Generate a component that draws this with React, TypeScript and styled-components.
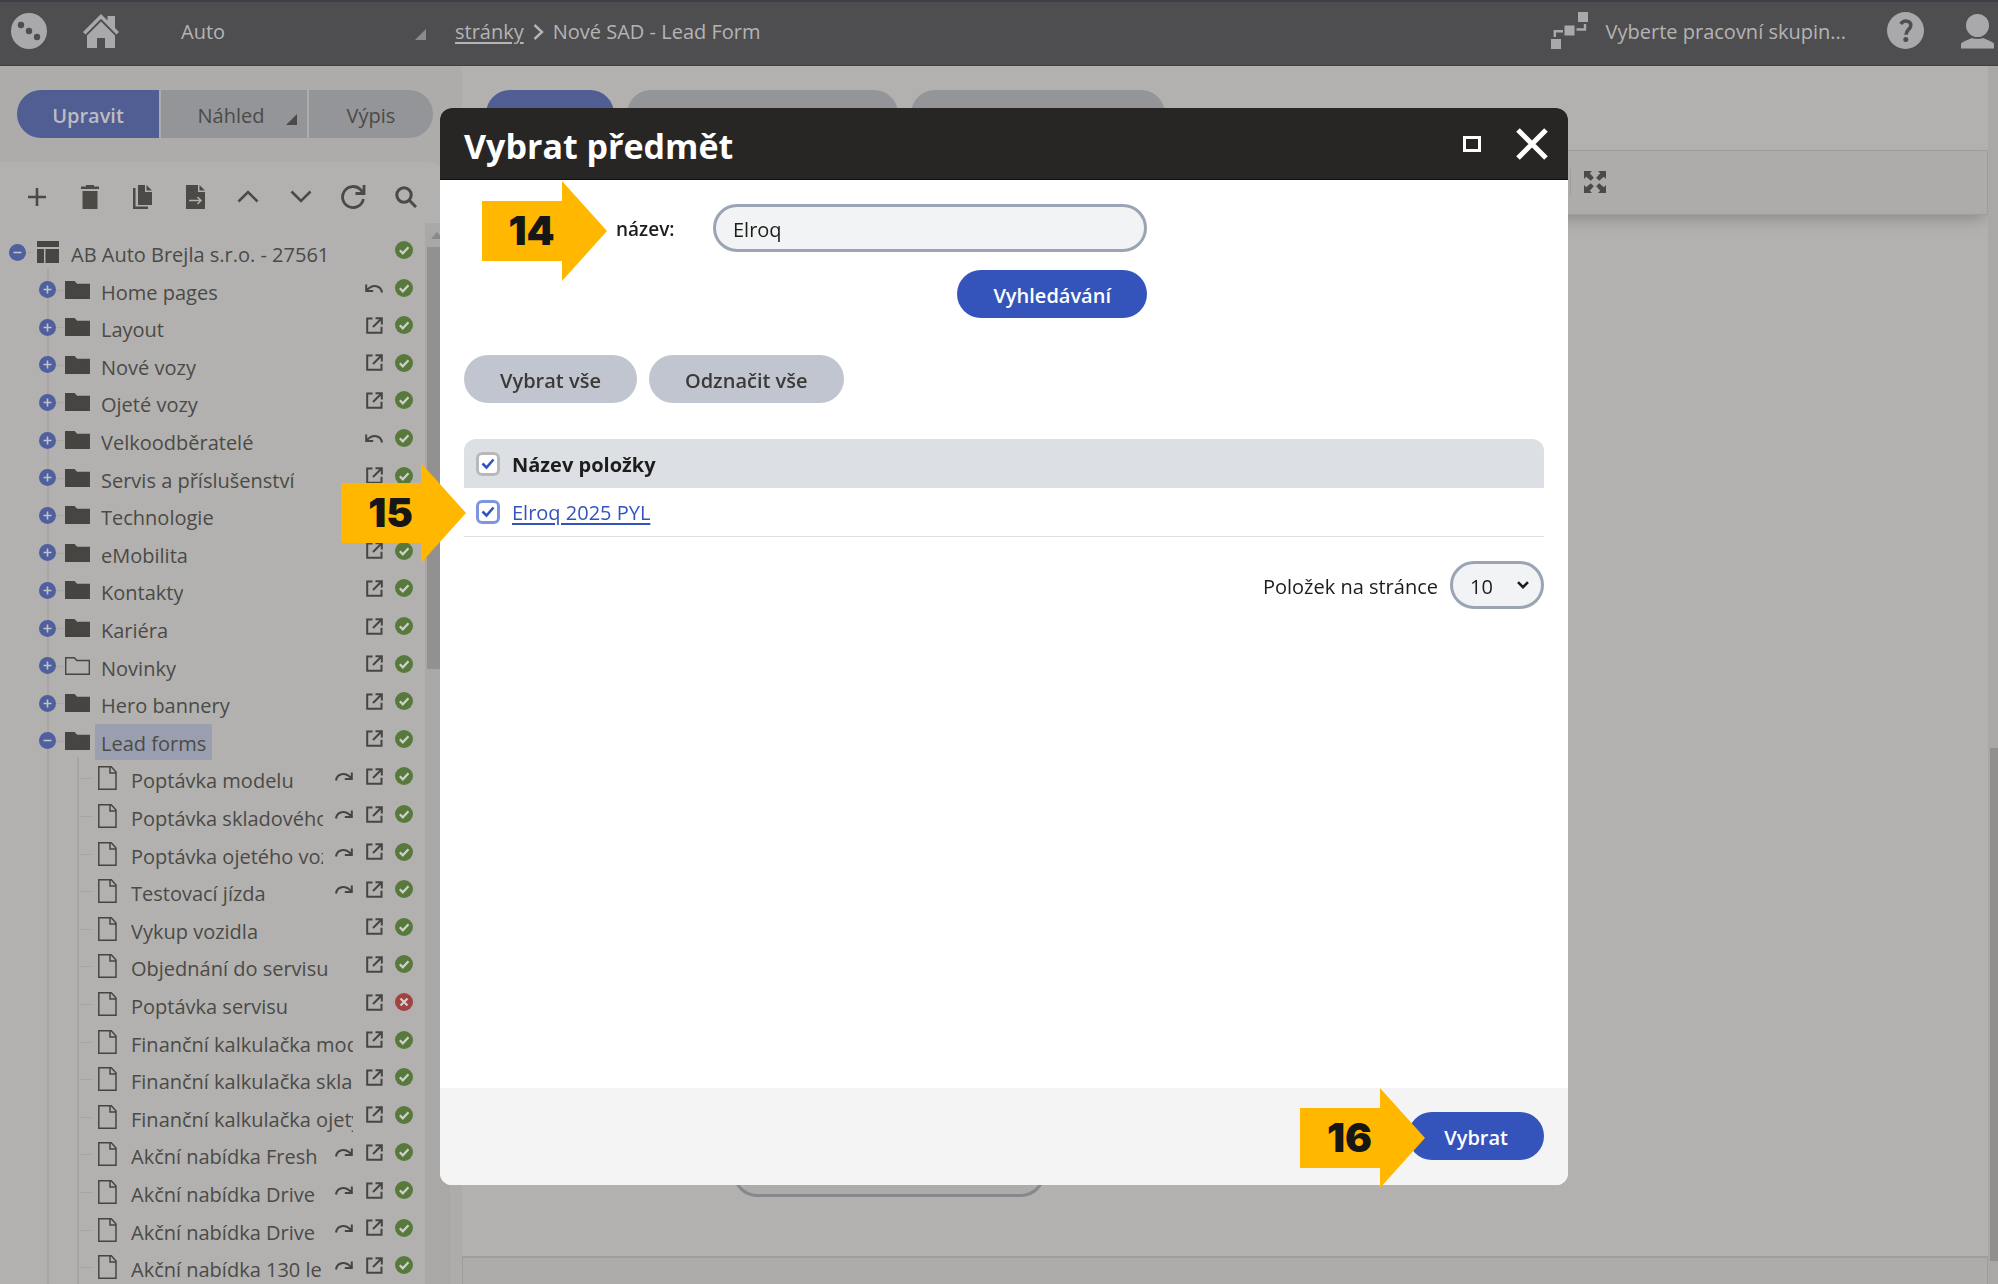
import React, { useState } from "react";
import styled, { createGlobalStyle, css } from "styled-components";

const font = `"Open Sans", "Noto Sans", "Liberation Sans", sans-serif`;

const c = {
  bar: "#4e4e50",
  barEdge: "#3f3f49",
  barText: "#b4b4b4",
  panel: "#b2b1af",
  panelAlt: "#adacaa",
  line: "#9f9e9c",
  ink: "#4b4a47",
  glyph: "#464542",
  accentDim: "#505e93",
  greyDim: "#949599",
  accent: "#3454bb",
  grey: "#c1c5cf",
  fieldLine: "#9aa4b5",
  field: "#f2f3f5",
  dark: "#272624",
  marker: "#ffb700",
};

const Global = createGlobalStyle`
  *, *::before, *::after { box-sizing: border-box; }
  body { margin: 0; font-family: ${font}; font-size: 20px; line-height: 28px; background: ${c.panel}; }
  button, input, select { font: inherit; color: inherit; }
  button { border: 0; padding: 0; background: none; cursor: pointer; }
  svg { display: block; flex: none; }
`;

const Shell = styled.div`
  height: 100vh;
  display: flex;
  flex-direction: column;
  overflow: hidden;
`;

/* ---------- top bar ---------- */

const TopBar = styled.header`
  flex: none;
  height: 66px;
  display: flex;
  align-items: center;
  background: ${c.bar};
  color: ${c.barText};
  border-top: 2px solid ${c.barEdge};
  border-bottom: 1px solid ${c.barEdge};
  padding-right: 4px;
  padding-bottom: 6px;
`;

const BarStart = styled.div`
  width: 455px;
  padding: 0 29px 0 11px;
  display: flex;
  align-items: center;
  gap: 36px;
`;

const SiteSwitch = styled.button`
  flex: 1;
  display: flex;
  align-items: center;
  justify-content: space-between;
  padding: 2px 0 0 26px;
  svg { margin-top: 6px; color: #8b8b8b; }
`;

const Crumbs = styled.nav`
  flex: 1;
  display: flex;
  align-items: center;
  gap: 9px;
  padding-top: 2px;
  a { color: inherit; text-underline-offset: 3px; }
`;

const BarEnd = styled.div`
  display: flex;
  align-items: center;
  gap: 37px;
`;

const GroupPicker = styled.button`
  display: flex;
  align-items: center;
  gap: 18px;
  margin-right: 4px;
  span { padding-top: 2px; }
`;

/* ---------- workspace ---------- */

const Workspace = styled.div`
  flex: 1;
  min-height: 0;
  display: flex;
`;

const Sidebar = styled.aside`
  flex: none;
  width: 462px;
  display: flex;
  flex-direction: column;
  background: ${c.panelAlt};
`;

const ModeTabs = styled.div`
  display: flex;
  gap: 2px;
  padding: 24px 0 24px 17px;
  height: 96px;
  flex: none;
`;

const ModeTab = styled.button<{ $width: number; $active?: boolean; $menu?: boolean }>`
  width: ${(p) => p.$width}px;
  height: 48px;
  padding: 4px 0 0 ${(p) => (p.$menu ? 27 : 0)}px;
  display: flex;
  align-items: center;
  justify-content: center;
  gap: 22px;
  background: ${(p) => (p.$active ? c.accentDim : c.greyDim)};
  color: ${(p) => (p.$active ? "#bdbdc0" : c.ink)};
  font-weight: ${(p) => (p.$active ? 600 : 500)};
  &:first-child { border-radius: 24px 0 0 24px; }
  &:last-child { border-radius: 0 24px 24px 0; }
  svg { margin-top: 6px; }
`;

const TreePanel = styled.div`
  flex: 1;
  min-height: 0;
  margin-right: 12px;
  display: flex;
  flex-direction: column;
  background: ${c.panel};
  border-top-right-radius: 24px;
  color: ${c.ink};
`;

const TreeTools = styled.div`
  flex: none;
  height: 61px;
  display: flex;
  align-items: center;
  justify-content: space-between;
  padding: 8px 29px 0 22px;
`;

const ToolButton = styled.button`
  width: 30px;
  height: 30px;
  display: grid;
  place-items: center;
`;

const TreeScroll = styled.div`
  flex: 1;
  min-height: 0;
  display: flex;
`;

const TreeList = styled.ul`
  flex: 1;
  min-width: 0;
  margin: 0;
  padding: 8px 6px 0 3px;
  list-style: none;
  overflow: hidden;
`;

const TreeRow = styled.li`
  height: 38px;
  display: flex;
  align-items: center;
  &:nth-child(5n + 2), &:nth-child(5n + 4) { height: 37px; }
`;

const Rail = styled.span<{ $vertical?: boolean; $branch?: boolean }>`
  flex: none;
  width: 30px;
  align-self: stretch;
  display: grid;
  place-items: center;
  padding: 4px 1px 0 0;
  background-repeat: no-repeat;
  background-image:
    linear-gradient(${(p) => (p.$vertical ? "#a7a6a5" : "transparent")} 0 0),
    linear-gradient(${(p) => (p.$branch ? "#a7a6a5" : "transparent")} 0 0);
  background-size: 2px 100%, 15px 1px;
  background-position: 14px 0, 15px 21px;
`;

const NodeToggle = styled.button`
  width: 17px;
  height: 17px;
  border-radius: 50%;
  display: grid;
  place-items: center;
  background: #505f9d;
  color: #c4c4c6;
`;

const NodeIcon = styled.span`
  flex: none;
  width: 32px;
  padding: 4px 0 0 2px;
  color: ${c.glyph};
`;

const NodeLabel = styled.span<{ $selected?: boolean }>`
  min-width: 0;
  height: 36px;
  margin-top: 6px;
  padding: 2px 6px 0;
  background: ${(p) => (p.$selected ? "#9a9fb0" : "transparent")};
`;

const NodeText = styled.span`
  display: block;
  line-height: 36px;
  margin-bottom: -2px;
  overflow: hidden;
  white-space: nowrap;
`;

const NodeActions = styled.span`
  margin-left: auto;
  flex: none;
  display: flex;
  color: ${c.glyph};
  > * { width: 30px; display: grid; place-items: center; }
`;

const TreeBar = styled.div`
  flex: none;
  width: 25px;
  display: flex;
  flex-direction: column;
  align-items: center;
  background: #a9a8a6;
  padding: 9px 3px 0 2px;
  color: #8a8987;
`;

const TreeThumb = styled.div`
  margin-top: 8px;
  width: 100%;
  height: 422px;
  background: #92918f;
`;

/* ---------- main area ---------- */

const Main = styled.main`
  flex: 1;
  min-width: 0;
  display: flex;
`;

const Page = styled.div`
  flex: 1;
  min-width: 0;
  display: flex;
  flex-direction: column;
  background: ${c.panel};
`;

const PageTabs = styled.div`
  height: 84px;
  flex: none;
  padding: 24px 24px 0;
  display: flex;
  gap: 13px;
`;

const PageTab = styled.button<{ $width: number; $active?: boolean }>`
  width: ${(p) => p.$width}px;
  height: 48px;
  padding-top: 4px;
  border-radius: 24px;
  font-weight: 600;
  background: ${(p) => (p.$active ? c.accentDim : c.greyDim)};
  color: ${(p) => (p.$active ? "#bdbdc0" : c.ink)};
`;

const EditorBar = styled.div`
  flex: none;
  height: 65px;
  display: flex;
  align-items: center;
  padding: 0 0 2px 1107px;
  gap: 13px;
  background: ${c.panelAlt};
  border: 1px solid ${c.line};
  box-shadow: 0 8px 14px -4px #8d8c8a;
  color: ${c.ink};
`;

const Divider = styled.span`
  width: 1px;
  height: 26px;
  background: ${c.line};
`;

const EditorBody = styled.div`
  flex: 1;
  min-height: 0;
  display: flex;
  align-items: flex-end;
  padding: 0 0 59px 271px;
`;

const DimField = styled.input`
  width: 312px;
  height: 48px;
  border: 3px solid #85888f;
  border-radius: 24px;
  background: ${c.panelAlt};
`;

const EditorFoot = styled.div`
  flex: none;
  height: 28px;
  background: ${c.panelAlt};
  border: 1px solid ${c.line};
  border-top-width: 2px;
  border-bottom: 0;
`;

const PageBar = styled.div`
  flex: none;
  width: 10px;
  background: #a9a8a6;
  display: flex;
  align-items: flex-end;
  padding: 0 0 23px 2px;
`;

const PageThumb = styled.div`
  width: 100%;
  height: 513px;
  background: #91908e;
`;

/* ---------- dialog ---------- */

const Backdrop = styled.div`
  position: fixed;
  inset: 0;
  padding: 108px 430px 99px 440px;
  display: flex;
`;

const Dialog = styled.section`
  flex: 1;
  min-width: 0;
  display: flex;
  flex-direction: column;
  border-radius: 12px;
  background: #fff;
  color: #1d1d1b;
`;

const DialogHead = styled.header`
  flex: none;
  height: 72px;
  display: flex;
  align-items: center;
  gap: 34px;
  padding: 0 20px 0 24px;
  border-radius: 12px 12px 0 0;
  border-bottom: 1px solid #0e0e0d;
  background: ${c.dark};
  color: #fff;
`;

const DialogTitle = styled.h2`
  flex: 1;
  margin: 0;
  padding-top: 4px;
  font-size: 34px;
  line-height: 44px;
  font-weight: 700;
`;

const DialogBody = styled.div`
  flex: 1;
  min-height: 0;
  padding: 24px 24px 0;
`;

const SearchForm = styled.form`
  position: relative;
  display: grid;
  grid-template-columns: 97px 434px;
  padding-left: 152px;
  row-gap: 18px;
  align-items: center;
`;

const FieldLabel = styled.label`
  padding-top: 2px;
  font-size: 19px;
  font-weight: 600;
`;

const pill = css`
  height: 48px;
  border-radius: 24px;
`;

const fieldBox = css`
  ${pill}
  border: 3px solid ${c.fieldLine};
  background: ${c.field};
  padding: 3px 17px 0;
  outline: 0;
`;

const TextField = styled.input`
  ${fieldBox}
  width: 100%;
`;

const Pill = styled.button<{ $tone?: "primary" | "plain"; $end?: boolean }>`
  ${pill}
  padding: 4px 36px 0;
  font-weight: 600;
  background: ${(p) => (p.$tone === "primary" ? c.accent : c.grey)};
  color: ${(p) => (p.$tone === "primary" ? "#fff" : "#3b3a37")};
  ${(p) => p.$end && css`grid-column: 2; justify-self: end;`}
`;

const BulkActions = styled.div`
  display: flex;
  gap: 12px;
  margin: 37px 0 36px;
`;

const ItemTable = styled.table`
  width: 100%;
  border-spacing: 0;
  th, td { height: 49px; padding: 0 0 0 12px; text-align: left; vertical-align: middle; }
  th { background: #dcdfe4; font-weight: 700; }
  th:first-child { width: 36px; border-top-left-radius: 12px; }
  th:last-child { border-top-right-radius: 12px; }
  th:last-child, td:last-child { padding-top: 2px; }
  td { border-bottom: 1px solid #dfdfdf; }
  a { color: ${c.accent}; text-underline-offset: 3px; }
`;

const TableArea = styled.div`
  position: relative;
`;

const Tick = styled.label<{ $tone: string }>`
  display: grid;
  width: 24px;
  height: 24px;
  place-items: center;
  color: ${c.accent};
  input, svg { grid-area: 1 / 1; }
  input {
    appearance: none;
    width: 24px;
    height: 24px;
    margin: 0;
    border: 3px solid ${(p) => p.$tone};
    border-radius: 6px;
    background: #fff;
  }
  svg { pointer-events: none; }
  input:not(:checked) + svg { visibility: hidden; }
`;

const Pager = styled.div`
  display: flex;
  align-items: center;
  justify-content: flex-end;
  gap: 12px;
  margin-top: 24px;
  label { padding-top: 3px; }
`;

const SelectBox = styled.span`
  display: grid;
  align-items: center;
  select, svg { grid-area: 1 / 1; }
  select { ${fieldBox} appearance: none; width: 94px; }
  svg { justify-self: end; margin-right: 15px; pointer-events: none; }
`;

const DialogFoot = styled.footer`
  position: relative;
  flex: none;
  display: flex;
  justify-content: flex-end;
  padding: 24px 24px 25px;
  border-radius: 0 0 12px 12px;
  background: #f4f4f4;
`;

const Marker = styled.span<{ $left?: number; $right?: number; $top: number }>`
  position: absolute;
  top: ${(p) => p.$top}px;
  ${(p) => (p.$left !== undefined ? `left: ${p.$left}px;` : "")}
  ${(p) => (p.$right !== undefined ? `right: ${p.$right}px;` : "")}
  width: 125px;
  height: 100px;
  padding-right: 26px;
  display: grid;
  place-items: center;
  background: ${c.marker};
  clip-path: polygon(0 20%, 64% 20%, 64% 0, 100% 50%, 64% 100%, 64% 80%, 0 80%);
  font-family: Inter, "Open Sans", sans-serif;
  font-size: 40px;
  line-height: 48px;
  font-weight: 900;
  color: #161616;
  pointer-events: none;
`;

/* ---------- icons ---------- */

const Corner = () => (
  <svg width="11" height="11" viewBox="0 0 11 11"><path d="M11 0v11H0z" fill="currentColor" /></svg>
);
const DotsLogo = () => (
  <svg width="36" height="36" viewBox="0 0 36 36">
    <circle cx="18" cy="18" r="18" fill="#a9a9ab" />
    <g fill={c.bar}><circle cx="10" cy="12" r="3.2" /><circle cx="18" cy="18" r="3.2" /><circle cx="26" cy="24" r="3.2" /></g>
  </svg>
);
const Home = () => (
  <svg width="36" height="34" viewBox="0 0 36 34" fill="#a9a9ab">
    <path d="M18 0 24.500 6.500V2H32v12l4 4-2.500 2.500L18 4.800 2.500 20.500 0 18z" />
    <path d="M18 7.500 32 21.500V34H22V24h-8v10H4V21.500z" />
  </svg>
);
const Chevron = () => (
  <svg width="11" height="18" viewBox="0 0 11 18" fill="none" stroke="currentColor" strokeWidth="2.400"><path d="m1.500 2 7.500 7-7.500 7" /></svg>
);
const Flow = () => (
  <svg width="37" height="37" viewBox="0 0 37 37" fill="#a9a9ab">
    <path d="M27 0h10v10H27zM13.500 13.500h10v10h-10zM0 27h10v10H0z" />
    <path d="M3.800 25V19.200H12M25.500 17.500H34V12" fill="none" stroke="#a9a9ab" strokeWidth="2.400" />
  </svg>
);
const Help = () => (
  <svg width="37" height="37" viewBox="0 0 37 37">
    <circle cx="18.500" cy="18.500" r="18.500" fill="#a9a9ab" />
    <path d="M13.800 12c1.300-2.200 3-3 5-3 3 0 5 1.700 5 4.400 0 4-4.800 4.400-4.800 9.400" fill="none" stroke={c.bar} strokeWidth="3.600" />
    <circle cx="18.800" cy="27.500" r="2.500" fill={c.bar} />
  </svg>
);
const User = () => (
  <svg width="33" height="36" viewBox="0 0 33 36" fill="#a9a9ab">
    <circle cx="16.500" cy="12.500" r="11.500" />
    <path d="M0 35.500v-5c3-2.500 7-3.500 11-5.500 3 1.200 8 1.200 11 0 4 2 8 3 11 5.500v5z" />
  </svg>
);

const stroke = { fill: "none", stroke: "currentColor" };
const Plus = () => (<svg width="18" height="18" viewBox="0 0 18 18" {...stroke} strokeWidth="2.600"><path d="M9 0v18M0 9h18" /></svg>);
const Trash = () => (<svg width="18" height="24" viewBox="0 0 18 24" fill="currentColor"><path d="M5 0h8v1.500h5V4H0V1.500h5zM1.500 6h15v18h-15z" /></svg>);
const Copy = () => (
  <svg width="19" height="24" viewBox="0 0 19 24" fill="currentColor">
    <path d="M5 0h7v7h7v13H5zM13.500 0 19 5.500h-5.500z" /><path d="M0 3h2.500v18.500H15V24H0z" />
  </svg>
);
const MoveDoc = () => (
  <svg width="19" height="24" viewBox="0 0 19 24">
    <path d="M0 0h12v7h7v17H0zM13.500 0 19 5.500h-5.500z" fill="currentColor" />
    <path d="M3 15.500h12M11.500 12l3.500 3.500-3.500 3.500" fill="none" stroke={c.panel} strokeWidth="1.500" />
  </svg>
);
const Up = () => (<svg width="22" height="13" viewBox="0 0 22 13" {...stroke} strokeWidth="2.600"><path d="m1.500 11.500 9.500-9.500 9.500 9.500" /></svg>);
const Down = () => (<svg width="22" height="13" viewBox="0 0 22 13" {...stroke} strokeWidth="2.600"><path d="m1.500 1.500 9.500 9.500 9.500-9.500" /></svg>);
const Refresh = () => (
  <svg width="26" height="24" viewBox="0 0 26 24" {...stroke} strokeWidth="2.800"><path d="M23.400 14A10.500 10.500 0 1 1 20.500 4.600L23.500 8M24 0v8.500h-8.500" /></svg>
);
const Search = () => (
  <svg width="22" height="22" viewBox="0 0 22 22" {...stroke} strokeWidth="3"><circle cx="9" cy="9" r="7.200" /><path d="m14 14 7 7" /></svg>
);

const LayoutIcon = () => (
  <svg width="24" height="22" viewBox="0 0 24 22" fill="currentColor"><path d="M2 0h22v6H2zM2 8h7v14H2zM10.500 8H24v14H10.500z" /></svg>
);
const Folder = ({ open }: { open?: boolean }) => (
  <svg width="25" height="18" viewBox="0 0 25 18">
    <path d="M.7.700h8.600l2.500 2.800h12.500v13.800H.7z" fill={open ? "none" : "currentColor"} stroke="currentColor" strokeWidth="1.400" />
  </svg>
);
const FileIcon = () => (
  <svg width="25" height="24" viewBox="0 0 25 24" fill="none" stroke="currentColor" strokeWidth="1.500">
    <path d="M3.800 .8h12.500L21 6v17.200H3.800zM15 .8V7h6" />
  </svg>
);
const Undo = () => (
  <svg width="18" height="10" viewBox="0 0 18 10" {...stroke} strokeWidth="2"><path d="M17 9.500C16 2.500 8 .500 2 7M1.200 1.500V8h7" /></svg>
);
const Redo = () => (
  <svg width="18" height="10" viewBox="0 0 18 10" {...stroke} strokeWidth="2"><path d="M1 9.500C2 2.500 10 .500 16 7M16.800 1.500V8h-7" /></svg>
);
const External = () => (
  <svg width="17" height="17" viewBox="0 0 17 17" {...stroke} strokeWidth="2"><path d="M6.500 1.500H1.200v14.300h14.300v-6M9.500 1.200h6.300v6.300M15.500 1.500 7 10" /></svg>
);
const Ok = () => (
  <svg width="18" height="18" viewBox="0 0 18 18">
    <circle cx="9" cy="9" r="9" fill="#577a3c" /><path d="m4.800 9.300 3 3 5.700-6" fill="none" stroke="#d0d0cc" strokeWidth="2.200" />
  </svg>
);
const Bad = () => (
  <svg width="18" height="18" viewBox="0 0 18 18">
    <circle cx="9" cy="9" r="9" fill="#a04343" /><path d="m5.500 5.500 7 7m0-7-7 7" stroke="#d0d0cc" strokeWidth="2.200" />
  </svg>
);
const Sign = ({ minus }: { minus?: boolean }) => (
  <svg width="9" height="9" viewBox="0 0 9 9" {...stroke} strokeWidth="1.600"><path d={minus ? "M.5 4.500h8" : "M.5 4.500h8M4.500.5v8"} /></svg>
);
const Expand = () => (
  <svg width="22" height="22" viewBox="0 0 22 22" fill="currentColor">
    <path d="M0 0h8L5.800 2.200l4 4.500-3 3-4.600-4L0 8zM22 0v8l-2.200-2.300-4.600 4-3-3 4-4.500L14 0zM0 22v-8l2.200 2.300 4.600-4 3 3-4 4.500L8 22zM22 22h-8l2.200-2.200-4-4.500 3-3 4.600 4L22 14z" />
  </svg>
);
const Maximize = () => (
  <svg width="20" height="16" viewBox="0 0 20 16" {...stroke} strokeWidth="3"><path d="M2.500 1.500h15v13h-15z" /></svg>
);
const Close = () => (
  <svg width="32" height="32" viewBox="0 0 32 32" {...stroke} strokeWidth="5"><path d="m2 2 28 28M30 2 2 30" /></svg>
);
const TickMark = () => (
  <svg width="14" height="12" viewBox="0 0 14 12" {...stroke} strokeWidth="2.600"><path d="m1.500 5.500 4 4 7-8" /></svg>
);
const SelectArrow = () => (
  <svg width="12" height="8" viewBox="0 0 12 8" {...stroke} strokeWidth="2.600"><path d="m1 1.200 5 5 5-5" /></svg>
);

/* ---------- data ---------- */

type Mark = "undo" | "redo" | "ext";
type Node = { text: string; level: 0 | 1 | 2; marks?: Mark[]; bad?: boolean; open?: boolean; hollow?: boolean; selected?: boolean };

const folder = (text: string, extra: Partial<Node> = {}): Node => ({ text, level: 1, marks: ["ext"], ...extra });
const page = (text: string, redo = false, extra: Partial<Node> = {}): Node => ({
  text, level: 2, marks: redo ? ["redo", "ext"] : ["ext"], ...extra,
});

const nodes: Node[] = [
  { text: "AB Auto Brejla s.r.o. - 27561", level: 0, open: true },
  folder("Home pages", { marks: ["undo"] }),
  folder("Layout"),
  folder("Nové vozy"),
  folder("Ojeté vozy"),
  folder("Velkoodběratelé", { marks: ["undo"] }),
  folder("Servis a příslušenství"),
  folder("Technologie"),
  folder("eMobilita"),
  folder("Kontakty"),
  folder("Kariéra"),
  folder("Novinky", { hollow: true }),
  folder("Hero bannery"),
  folder("Lead forms", { open: true, selected: true }),
  page("Poptávka modelu", true),
  page("Poptávka skladového", true),
  page("Poptávka ojetého voz", true),
  page("Testovací jízda", true),
  page("Vykup vozidla"),
  page("Objednání do servisu"),
  page("Poptávka servisu", false, { bad: true }),
  page("Finanční kalkulačka mod"),
  page("Finanční kalkulačka sklad"),
  page("Finanční kalkulačka ojetý"),
  page("Akční nabídka Fresh", true),
  page("Akční nabídka Drive", true),
  page("Akční nabídka Drive", true),
  page("Akční nabídka 130 le", true),
];

const markIcon = { undo: <Undo />, redo: <Redo />, ext: <External /> };

const tools: [string, React.ReactNode][] = [
  ["Přidat", <Plus />], ["Smazat", <Trash />], ["Kopírovat", <Copy />], ["Přesunout", <MoveDoc />],
  ["Nahoru", <Up />], ["Dolů", <Down />], ["Obnovit", <Refresh />], ["Hledat", <Search />],
];

function TreeNode({ node }: { node: Node }) {
  const toggle = (
    <NodeToggle aria-label={node.open ? "Sbalit" : "Rozbalit"}><Sign minus={node.open} /></NodeToggle>
  );
  return (
    <TreeRow>
      {node.level === 0 && <Rail $branch>{toggle}</Rail>}
      {node.level === 1 && (<><Rail /><Rail $vertical $branch>{toggle}</Rail></>)}
      {node.level === 2 && (<><Rail /><Rail $vertical /><Rail $vertical $branch /></>)}
      <NodeIcon>
        {node.level === 0 ? <LayoutIcon /> : node.level === 1 ? <Folder open={node.hollow} /> : <FileIcon />}
      </NodeIcon>
      <NodeLabel $selected={node.selected}><NodeText>{node.text}</NodeText></NodeLabel>
      <NodeActions>
        {node.marks?.map((m) => <span key={m}>{markIcon[m]}</span>)}
        <span>{node.bad ? <Bad /> : <Ok />}</span>
      </NodeActions>
    </TreeRow>
  );
}

function PickDialog() {
  const [query, setQuery] = useState("Elroq");
  const [picked, setPicked] = useState(true);
  return (
    <Dialog role="dialog" aria-modal="true" aria-labelledby="dialog-title">
      <DialogHead>
        <DialogTitle id="dialog-title">Vybrat předmět</DialogTitle>
        <button aria-label="Maximalizovat"><Maximize /></button>
        <button aria-label="Zavřít"><Close /></button>
      </DialogHead>
      <DialogBody>
        <SearchForm onSubmit={(e) => e.preventDefault()}>
          <Marker $left={18} $top={-23}>14</Marker>
          <FieldLabel htmlFor="name">název:</FieldLabel>
          <TextField id="name" value={query} onChange={(e) => setQuery(e.target.value)} />
          <Pill type="submit" $tone="primary" $end>Vyhledávání</Pill>
        </SearchForm>
        <BulkActions>
          <Pill onClick={() => setPicked(true)}>Vybrat vše</Pill>
          <Pill onClick={() => setPicked(false)}>Odznačit vše</Pill>
        </BulkActions>
        <TableArea>
          <Marker $left={-123} $top={24}>15</Marker>
          <ItemTable>
            <thead>
              <tr>
                <th>
                  <Tick $tone="#b9b9b9">
                    <input type="checkbox" aria-label="Vše" checked={picked} onChange={() => setPicked(!picked)} /><TickMark />
                  </Tick>
                </th>
                <th scope="col">Název položky</th>
              </tr>
            </thead>
            <tbody>
              <tr>
                <td>
                  <Tick $tone="#7f95e2">
                    <input type="checkbox" aria-label="Elroq 2025 PYL" checked={picked} onChange={() => setPicked(!picked)} /><TickMark />
                  </Tick>
                </td>
                <td><a href="#item">Elroq 2025 PYL</a></td>
              </tr>
            </tbody>
          </ItemTable>
        </TableArea>
        <Pager>
          <label htmlFor="per-page">Položek na stránce</label>
          <SelectBox>
            <select id="per-page" defaultValue="10"><option>10</option><option>25</option><option>50</option></select>
            <SelectArrow />
          </SelectBox>
        </Pager>
      </DialogBody>
      <DialogFoot>
        <Pill $tone="primary">Vybrat</Pill>
        <Marker $right={143} $top={0}>16</Marker>
      </DialogFoot>
    </Dialog>
  );
}

export default function App() {
  return (
    <>
      <Global />
      <Shell>
        <TopBar>
          <BarStart>
            <DotsLogo />
            <Home />
            <SiteSwitch>Auto<Corner /></SiteSwitch>
          </BarStart>
          <Crumbs>
            <a href="#pages">stránky</a>
            <Chevron />
            <span>Nové SAD - Lead Form</span>
          </Crumbs>
          <BarEnd>
            <GroupPicker><Flow /><span>Vyberte pracovní skupin...</span></GroupPicker>
            <button aria-label="Nápověda"><Help /></button>
            <button aria-label="Uživatel"><User /></button>
          </BarEnd>
        </TopBar>
        <Workspace>
          <Sidebar>
            <ModeTabs>
              <ModeTab $width={142} $active>Upravit</ModeTab>
              <ModeTab $width={146} $menu>Náhled<Corner /></ModeTab>
              <ModeTab $width={124}>Výpis</ModeTab>
            </ModeTabs>
            <TreePanel>
              <TreeTools>
                {tools.map(([name, icon]) => <ToolButton key={name} aria-label={name}>{icon}</ToolButton>)}
              </TreeTools>
              <TreeScroll>
                <TreeList>{nodes.map((n, i) => <TreeNode key={i} node={n} />)}</TreeList>
                <TreeBar>
                  <svg width="12" height="7" viewBox="0 0 12 7"><path d="M6 0l6 7H0z" fill="currentColor" /></svg>
                  <TreeThumb />
                </TreeBar>
              </TreeScroll>
            </TreePanel>
          </Sidebar>
          <Main>
            <Page>
              <PageTabs>
                <PageTab $width={128} $active>Obsah</PageTab>
                <PageTab $width={271}>Vlastnosti modulu</PageTab>
                <PageTab $width={254}>Nastavení</PageTab>
              </PageTabs>
              <EditorBar>
                <Divider />
                <button aria-label="Celá obrazovka"><Expand /></button>
              </EditorBar>
              <EditorBody><DimField aria-label="Hodnota" /></EditorBody>
              <EditorFoot />
            </Page>
            <PageBar><PageThumb /></PageBar>
          </Main>
        </Workspace>
      </Shell>
      <Backdrop><PickDialog /></Backdrop>
    </>
  );
}
